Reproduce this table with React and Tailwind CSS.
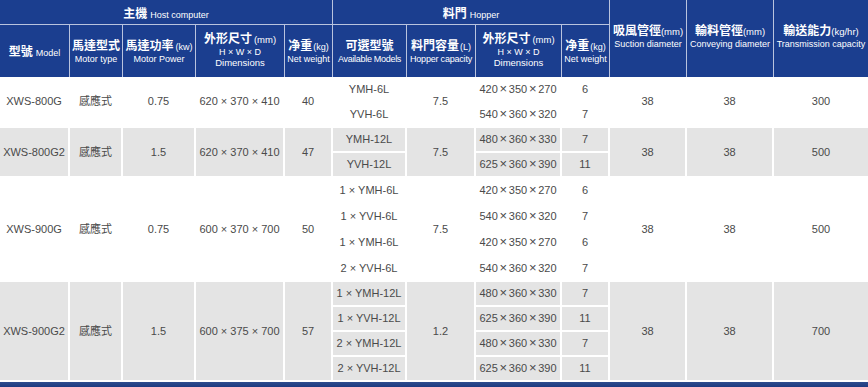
import React from "react";

const X = () => <span className="inline-block w-[11px] text-center text-[13px] leading-none">×</span>;

function HopDims({ v }) {
  const parts = v.split("×");
  return (
    <span>
      {parts[0]}
      <X />
      {parts[1]}
      <X />
      {parts[2]}
    </span>
  );
}

const groups = [
  {
    bg: "bg-white",
    span: "row-span-2",
    model: "XWS-800G",
    power: "0.75",
    dims: "620 × 370 × 410",
    weight: "40",
    cap: "7.5",
    trans: "300",
    subs: [
      ["YMH-6L", "420×350×270", "6"],
      ["YVH-6L", "540×360×320", "7"],
    ],
  },
  {
    bg: "bg-[#e4e4e4]",
    span: "row-span-2",
    model: "XWS-800G2",
    power: "1.5",
    dims: "620 × 370 × 410",
    weight: "47",
    cap: "7.5",
    trans: "500",
    subs: [
      ["YMH-12L", "480×360×330", "7"],
      ["YVH-12L", "625×360×390", "11"],
    ],
  },
  {
    bg: "bg-white",
    span: "row-span-4",
    model: "XWS-900G",
    power: "0.75",
    dims: "600 × 370 × 700",
    weight: "50",
    cap: "7.5",
    trans: "500",
    subs: [
      ["1 × YMH-6L", "420×350×270", "6"],
      ["1 × YVH-6L", "540×360×320", "7"],
      ["1 × YMH-6L", "420×350×270", "6"],
      ["2 × YVH-6L", "540×360×320", "7"],
    ],
  },
  {
    bg: "bg-[#e4e4e4]",
    span: "row-span-4",
    model: "XWS-900G2",
    power: "1.5",
    dims: "600 × 375 × 700",
    weight: "57",
    cap: "1.2",
    trans: "700",
    subs: [
      ["1 × YMH-12L", "480×360×330", "7"],
      ["1 × YVH-12L", "625×360×390", "11"],
      ["2 × YMH-12L", "480×360×330", "7"],
      ["2 × YVH-12L", "625×360×390", "11"],
    ],
  },
];

const hc =
  "flex flex-col items-center justify-center text-center text-white border-[#b9c3de] leading-[1.15] whitespace-nowrap bg-[#1b3e8f]";

function Zh({ children }) {
  return <span className="text-[12px] font-bold">{children}</span>;
}
function En({ children }) {
  return <span className="text-[9px]">{children}</span>;
}

export default function App() {
  const body = [];
  groups.forEach((g, gi) => {
    const c = `flex items-center justify-center text-center whitespace-nowrap border-white ${g.bg}`;
    g.subs.forEach((s, si) => {
      if (si === 0) {
        body.push(
          <div key={`${gi}-m`} className={`${c} ${g.span} border-r-2 border-b-2`}>{g.model}</div>,
          <div key={`${gi}-t`} className={`${c} ${g.span} border-r-2 border-b-2`}>感應式</div>,
          <div key={`${gi}-p`} className={`${c} ${g.span} border-r-2 border-b-2`}>{g.power}</div>,
          <div key={`${gi}-d`} className={`${c} ${g.span} border-r-2 border-b-2`}>{g.dims}</div>,
          <div key={`${gi}-w`} className={`${c} ${g.span} border-r-2 border-b-2`}>{g.weight}</div>
        );
      }
      body.push(
        <div key={`${gi}-${si}-a`} className={`${c} border-r-2 border-b-2`}>{s[0]}</div>
      );
      if (si === 0) {
        body.push(
          <div key={`${gi}-cap`} className={`${c} ${g.span} border-r-2 border-b-2`}>{g.cap}</div>
        );
      }
      body.push(
        <div key={`${gi}-${si}-d`} className={`${c} border-r-2 border-b-2`}>
          <HopDims v={s[1]} />
        </div>,
        <div key={`${gi}-${si}-w`} className={`${c} border-r-2 border-b-2`}>{s[2]}</div>
      );
      if (si === 0) {
        body.push(
          <div key={`${gi}-s`} className={`${c} ${g.span} border-r-2 border-b-2`}>38</div>,
          <div key={`${gi}-cv`} className={`${c} ${g.span} border-r-2 border-b-2`}>38</div>,
          <div key={`${gi}-tr`} className={`${c} ${g.span} border-b-2`}>{g.trans}</div>
        );
      }
    });
  });

  return (
    <div className="w-[868px] h-[387px] overflow-hidden bg-white font-['Liberation_Sans','Noto_Sans_CJK_TC',sans-serif]">
      <div className="grid grid-cols-[70px_53px_73px_89px_48px_74px_69px_86px_48px_77px_87px_94px] grid-rows-[25px_52px_26px_25px_25px_25px_26px_26px_26px_26px_25px_25px_25px_25px_5px] text-[11px] text-[#4a4a4a]">
        {/* header row 1 */}
        <div className={`${hc} col-span-5 border-r border-b pt-[5px]`}>
          <div className="flex flex-row items-baseline gap-[3px]">
            <Zh>主機</Zh>
            <En>Host computer</En>
          </div>
        </div>
        <div className={`${hc} col-span-4 border-r border-b pt-[5px]`}>
          <div className="flex flex-row items-baseline gap-[3px]">
            <Zh>料門</Zh>
            <En>Hopper</En>
          </div>
        </div>
        <div className={`${hc} row-span-2 border-r pb-[2px]`}>
          <div className="flex items-baseline">
            <Zh>吸風管徑</Zh>
            <span className="text-[9.5px]">(mm)</span>
          </div>
          <En>Suction diameter</En>
        </div>
        <div className={`${hc} row-span-2 border-r pb-[2px]`}>
          <div className="flex items-baseline">
            <Zh>輸料管徑</Zh>
            <span className="text-[9.5px]">(mm)</span>
          </div>
          <En>Conveying diameter</En>
        </div>
        <div className={`${hc} row-span-2 pb-[2px]`}>
          <div className="flex items-baseline">
            <Zh>輸送能力</Zh>
            <span className="text-[9.5px]">(kg/hr)</span>
          </div>
          <En>Transmission capacity</En>
        </div>

        {/* header row 2 */}
        <div className={`${hc} border-r pt-[3px]`}>
          <div className="flex items-baseline gap-[3px]">
            <Zh>型號</Zh>
            <En>Model</En>
          </div>
        </div>
        <div className={`${hc} border-r pt-[2px]`}>
          <Zh>馬達型式</Zh>
          <En>Motor type</En>
        </div>
        <div className={`${hc} border-r pt-[2px]`}>
          <div className="flex items-baseline gap-[2px]">
            <Zh>馬達功率</Zh>
            <span className="text-[9px]">(kw)</span>
          </div>
          <En>Motor Power</En>
        </div>
        <div className={`${hc} border-r leading-[1.1]`}>
          <div className="flex items-baseline gap-[2px]">
            <Zh>外形尺寸</Zh>
            <span className="text-[9.5px]">(mm)</span>
          </div>
          <En>H × W × D</En>
          <span className="text-[9.5px] mt-[1px]">Dimensions</span>
        </div>
        <div className={`${hc} border-r pt-[2px]`}>
          <div className="flex items-baseline gap-[1px]">
            <Zh>净重</Zh>
            <span className="text-[9px]">(kg)</span>
          </div>
          <En>Net weight</En>
        </div>
        <div className={`${hc} border-r pt-[2px]`}>
          <Zh>可選型號</Zh>
          <span className="text-[9px] tracking-[-0.3px]">Available Models</span>
        </div>
        <div className={`${hc} border-r pt-[2px]`}>
          <div className="flex items-baseline gap-[1px]">
            <Zh>料門容量</Zh>
            <span className="text-[9px]">(L)</span>
          </div>
          <span className="text-[9px] tracking-[-0.2px]">Hopper capacity</span>
        </div>
        <div className={`${hc} border-r leading-[1.1]`}>
          <div className="flex items-baseline gap-[2px]">
            <Zh>外形尺寸</Zh>
            <span className="text-[9.5px]">(mm)</span>
          </div>
          <En>H × W × D</En>
          <span className="text-[9.5px] mt-[1px]">Dimensions</span>
        </div>
        <div className={`${hc} border-r pt-[2px]`}>
          <div className="flex items-baseline gap-[1px]">
            <Zh>净重</Zh>
            <span className="text-[9px]">(kg)</span>
          </div>
          <En>Net weight</En>
        </div>

        {body}

        <div className="col-span-12 bg-gradient-to-b from-[#2d4c8e] to-[#1d3a80]" />
      </div>
    </div>
  );
}
